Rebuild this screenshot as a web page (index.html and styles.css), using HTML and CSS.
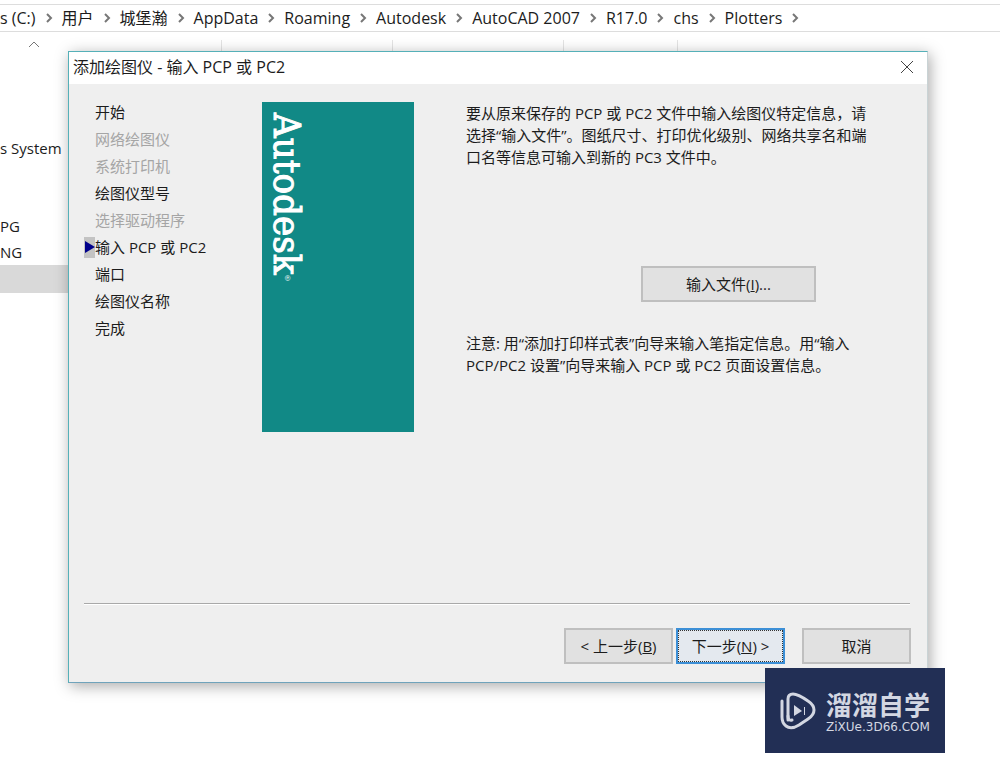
FILE: index.html
```
<!DOCTYPE html>
<html lang="zh-CN">
<head>
<meta charset="utf-8">
<meta name="viewport" content="width=device-width, initial-scale=1">
<title>添加绘图仪 - 输入 PCP 或 PC2</title>
<link rel="stylesheet" href="styles.css">
</head>
<body>
<svg class="sprite" aria-hidden="true">
  <symbol id="chevron" viewBox="0 0 8 10"><path d="M2 1l4 4-4 4" fill="none" stroke="#777" stroke-width="2"/></symbol>
</svg>
<div class="explorer">
  <nav class="address" aria-label="路径">
    <span>s (C:)</span><svg class="chevron"><use href="#chevron"/></svg>
    <span>用户</span><svg class="chevron"><use href="#chevron"/></svg>
    <span>城堡瀚</span><svg class="chevron"><use href="#chevron"/></svg>
    <span>AppData</span><svg class="chevron"><use href="#chevron"/></svg>
    <span>Roaming</span><svg class="chevron"><use href="#chevron"/></svg>
    <span>Autodesk</span><svg class="chevron"><use href="#chevron"/></svg>
    <span>AutoCAD 2007</span><svg class="chevron"><use href="#chevron"/></svg>
    <span>R17.0</span><svg class="chevron"><use href="#chevron"/></svg>
    <span>chs</span><svg class="chevron"><use href="#chevron"/></svg>
    <span>Plotters</span><svg class="chevron"><use href="#chevron"/></svg>
  </nav>
  <div class="panes">
    <aside class="tree">
      <svg class="caret" viewBox="0 0 12 8"><path d="M1 7l5-5 5 5" fill="none" stroke="#777"/></svg>
      <p class="tree-row system">s System</p>
      <p class="tree-row">PG</p>
      <p class="tree-row">NG</p>
      <p class="tree-row selected"></p>
    </aside>
    <div class="columns"><i></i><i></i><i></i><i></i></div>
  </div>
</div>

<section class="dialog" role="dialog" aria-labelledby="dialog-title">
  <header class="titlebar">
    <h1 id="dialog-title">添加绘图仪 - 输入 PCP 或 PC2</h1>
    <button class="close" type="button" aria-label="关闭"><svg viewBox="0 0 14 14"><path d="M1 1l12 12M13 1L1 13" fill="none" stroke="#444"/></svg></button>
  </header>
  <div class="wizard">
    <ol class="steps">
      <li>开始</li>
      <li class="off">网络绘图仪</li>
      <li class="off">系统打印机</li>
      <li>绘图仪型号</li>
      <li class="off">选择驱动程序</li>
      <li class="current">输入 PCP 或 PC2</li>
      <li>端口</li>
      <li>绘图仪名称</li>
      <li>完成</li>
    </ol>
    <div class="banner"><span class="brand">Autodesk<small>®</small></span></div>
    <div class="content">
      <p>要从原来保存的 PCP 或 PC2 文件中输入绘图仪特定信息，请<br>选择“输入文件”。图纸尺寸、打印优化级别、网络共享名和端<br>口名等信息可输入到新的 PC3 文件中。</p>
      <button class="btn import" type="button">输入文件(<u>I</u>)...</button>
      <p>注意: 用“添加打印样式表”向导来输入笔指定信息。用“输入<br>PCP/PC2 设置”向导来输入 PCP 或 PC2 页面设置信息。</p>
    </div>
  </div>
  <footer class="actions">
    <button class="btn" type="button">&lt; 上一步(<u>B</u>)</button>
    <button class="btn primary" type="button">下一步(<u>N</u>) &gt;</button>
    <button class="btn cancel" type="button">取消</button>
  </footer>
</section>

<div class="watermark">
  <svg class="mark" viewBox="0 0 36 38">
    <g fill="none" stroke="#d3d7e2" stroke-width="3" stroke-linecap="round" stroke-linejoin="round">
      <path d="M8 28V7Q8 2 13 2Q18 2 28 9Q34 13 34 18Q34 23 28 27L19 33Q11 38 6 34Q2 31 2 25V9"/>
      <path d="M8 24Q8 29 12 28"/>
    </g>
    <path d="M14 13v11l8-5zM24 15h1v8h-1z" fill="#d3d7e2"/>
  </svg>
  <div>
    <div class="wm-name">溜溜自学</div>
    <div class="wm-site">ZiXUe.3D66.COM</div>
  </div>
</div>
</body>
</html>
```
FILE: styles.css
```
* { box-sizing: border-box; }
body {
  margin: 0;
  min-height: 100vh;
  position: relative;
  overflow: hidden;
  background: #fff;
  color: #1c1c1c;
  font: 15px/22px "Open Sans", "Noto Sans CJK SC", sans-serif;
}
p, h1, ol { margin: 0; padding: 0; }
.sprite { display: none; }

.explorer { padding-top: 4px; }
.address {
  display: flex;
  align-items: center;
  gap: 9px;
  height: 28px;
  border: solid #ddd;
  border-width: 1px 0;
  font-size: 16px;
  white-space: nowrap;
}
.chevron { width: 8px; height: 10px; flex: none; }
.panes { display: flex; }
.tree { width: 68px; overflow: hidden; white-space: nowrap; padding-top: 8px; flex: none; }
.caret { display: block; width: 12px; height: 8px; margin-left: 28px; }
.tree-row { height: 26px; line-height: 26px; }
.system { margin: 87px 0 52px; }
.selected { height: 28px; background: #d9d9d9; }
.columns { display: flex; padding: 8px 0 0 153px; height: 40px; }
.columns i { width: 171px; border-left: 1px solid #e4e4e4; }
.columns i:nth-child(3) { width: 114px; }

.dialog {
  position: absolute;
  top: 51px;
  left: 68px;
  right: 72px;
  background: #efefef;
  border: 1px solid #55b0b8;
  border-right-color: #c9d3d5;
  border-bottom-color: #6fa3bb;
  box-shadow: 2px 3px 14px rgba(0, 0, 0, .34);
}
.titlebar {
  display: flex;
  align-items: center;
  justify-content: space-between;
  height: 32px;
  padding: 0 7px 2px 4px;
  background: #fff;
}
.titlebar h1 { font-size: 16px; font-weight: 400; }
.close {
  display: grid;
  place-items: center;
  width: 26px;
  height: 26px;
  padding: 0;
  border: 0;
  background: none;
}
.close svg { width: 14px; height: 14px; }
.wizard {
  display: grid;
  grid-template-columns: 167px 152px 1fr;
  margin: 0 17px 0 15px;
  padding: 18px 0 0 11px;
  height: 520px;
  border-bottom: 1px solid #a9a9a9;
  box-shadow: 0 1px #fff;
}
.steps { list-style: none; line-height: 27px; margin-top: -3px; }
.off { color: #a5a5a5; }
.current { position: relative; }
.current::before {
  content: "";
  position: absolute;
  left: -11px;
  top: 3px;
  width: 11px;
  height: 21px;
  background: #c3c3c3;
}
.current::after {
  content: "";
  position: absolute;
  left: -10px;
  top: 7px;
  border: solid transparent;
  border-width: 6px 0 6px 10px;
  border-left-color: #00008b;
}
.banner {
  height: 330px;
  padding: 11px 6px;
  background: #118986;
  color: #fff;
}
.brand {
  display: block;
  writing-mode: vertical-rl;
  font: 38px/38px "DejaVu Serif Condensed", "DejaVu Serif", serif;
  -webkit-text-stroke: 1px #fff;
}
.brand small { font-size: 8px; -webkit-text-stroke: 0; }
.content { padding-left: 52px; white-space: nowrap; }
.btn {
  width: 109px;
  height: 36px;
  padding: 0;
  border: 2px solid #bfbfbf;
  background: #e1e1e1;
  color: inherit;
  font: inherit;
}
.import { display: block; width: 175px; margin: 98px 0 30px 175px; }
.actions {
  display: flex;
  justify-content: flex-end;
  gap: 3px;
  padding: 24px 16px 18px;
}
.primary { border-color: #3c8fd6; background: #e4e9ef; outline: 1px dotted #333; outline-offset: -3px; }
.cancel { margin-left: 14px; }

.watermark {
  position: absolute;
  top: 668px;
  right: 55px;
  display: flex;
  align-items: center;
  gap: 10px;
  width: 180px;
  height: 85px;
  padding-left: 15px;
  background: #222f55;
  color: #d3d7e2;
}
.mark { width: 36px; height: 38px; }
.wm-name { font: 700 26px/32px "Noto Sans CJK SC", sans-serif; }
.wm-site { font: 12px/14px "DejaVu Sans", sans-serif; }
```
